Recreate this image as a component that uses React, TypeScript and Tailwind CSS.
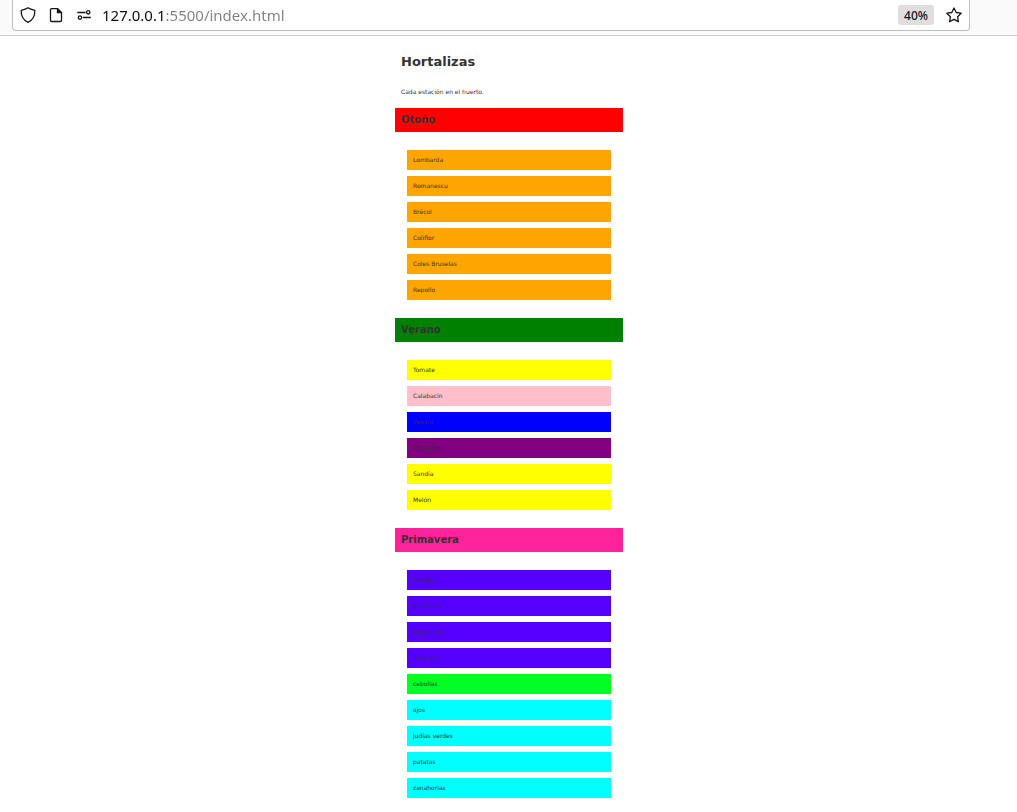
import React from "react";

type Crop = { name: string; color: string };
type Season = { title: string; color: string; crops: Crop[] };

const seasons: Season[] = [
  {
    title: "Otoño",
    color: "bg-[#ff0000]",
    crops: [
      { name: "Lombarda", color: "bg-[#ffa500]" },
      { name: "Romanescu", color: "bg-[#ffa500]" },
      { name: "Brécol", color: "bg-[#ffa500]" },
      { name: "Coliflor", color: "bg-[#ffa500]" },
      { name: "Coles Bruselas", color: "bg-[#ffa500]" },
      { name: "Repollo", color: "bg-[#ffa500]" },
    ],
  },
  {
    title: "Verano",
    color: "bg-[#008000]",
    crops: [
      { name: "Tomate", color: "bg-[#ffff00]" },
      { name: "Calabacín", color: "bg-[#ffc0cb]" },
      { name: "Pepino", color: "bg-[#0000ff]" },
      { name: "Pimiento", color: "bg-[#800080]" },
      { name: "Sandía", color: "bg-[#ffff00]" },
      { name: "Melón", color: "bg-[#ffff00]" },
    ],
  },
  {
    title: "Primavera",
    color: "bg-[#ff2299]",
    crops: [
      { name: "Acelgas", color: "bg-[#5500ff]" },
      { name: "guisantes", color: "bg-[#5500ff]" },
      { name: "espinacas", color: "bg-[#5500ff]" },
      { name: "lechugas", color: "bg-[#5500ff]" },
      { name: "cebollas", color: "bg-[#00ff22]" },
      { name: "ajos", color: "bg-[#00ffff]" },
      { name: "judías verdes", color: "bg-[#00ffff]" },
      { name: "patatas", color: "bg-[#00ffff]" },
      { name: "zanahorias", color: "bg-[#00ffff]" },
    ],
  },
];

function IconButton({ label, children }: { label: string; children: React.ReactNode }) {
  return (
    <button type="button" aria-label={label} className="flex size-4 shrink-0 items-center justify-center text-[#15141a]">
      <svg viewBox="0 0 16 16" className="size-4" fill="none" stroke="currentColor" strokeWidth="1.3" strokeLinejoin="round" strokeLinecap="round" aria-hidden="true">
        {children}
      </svg>
    </button>
  );
}

function AddressBar() {
  return (
    <header className="flex h-9 items-start border-b border-[#cccccc] bg-[#fafafa] pr-[47px] pl-3">
      <div className="flex h-[31px] flex-1 items-center rounded-b-[4px] border border-t-0 border-[#bfbfc3] bg-white px-[7px] font-['Noto_Sans','Open_Sans',sans-serif]">
        <div className="flex items-center gap-3">
          <IconButton label="Protección contra rastreo">
            <path d="M8 .8C6.200 2.200 3.800 2.800 1.200 3.300 1 8.600 3.200 13.200 8 15.400c4.800-2.200 7-6.800 6.800-12.100C12.200 2.800 9.800 2.200 8 .8Z" />
          </IconButton>
          <IconButton label="Información del sitio">
            <path d="M9.500 1.700H3.500a1 1 0 0 0-1 1v10.800a1 1 0 0 0 1 1h9a1 1 0 0 0 1-1V5.700Z" />
            <path d="M9.500 1.700v4h4Z" fill="currentColor" />
          </IconButton>
          <IconButton label="Permisos">
            <path d="M1.800 5.500h7.200M7.500 10.500h6.800" />
            <circle cx="12.200" cy="5.300" r="1.700" />
            <circle cx="4" cy="10.600" r="1.700" />
          </IconButton>
        </div>
        <input
          type="text"
          aria-label="Dirección"
          defaultValue="127.0.0.1:5500/index.html"
          spellCheck={false}
          className="ml-[10px] h-6 min-w-0 flex-1 bg-[linear-gradient(to_right,#0c0c0d_63px,#808085_63px)] bg-clip-text text-[15px] text-transparent outline-none"
        />
        <button type="button" className="h-5 rounded-[3px] bg-[#dedede] px-[6px] text-[12px] leading-[22px] font-medium text-[#15141a]">
          40%
        </button>
        <div className="ml-3 flex">
          <IconButton label="Añadir a marcadores">
            <path d="m8 1 2.200 4.500 4.900.7-3.500 3.500.8 5L8 12.400l-4.400 2.300.8-5L.9 6.200l4.900-.7Z" />
          </IconButton>
        </div>
      </div>
    </header>
  );
}

function SeasonSection({ season }: { season: Season }) {
  return (
    <section>
      <h2 className={`h-6 px-[6px] text-[10px] leading-6 font-bold ${season.color}`}>{season.title}</h2>
      <ul className="flex flex-col gap-[6px] px-3 py-[18px]">
        {season.crops.map((crop) => (
          <li key={crop.name} className={`h-5 px-[6px] leading-5 ${crop.color}`}>
            {crop.name}
          </li>
        ))}
      </ul>
    </section>
  );
}

export default function App() {
  return (
    <div className="min-h-screen bg-white">
      <AddressBar />
      <div className="pl-px">
        <main className="mx-auto w-full max-w-[228px] pt-4 font-['DejaVu_Sans',sans-serif] text-[6px] text-[#333333]">
          <h1 className="px-[6px] text-[13px] leading-5 font-bold">Hortalizas</h1>
          <p className="px-[6px] pt-[14px] pb-[10px] leading-3">Cada estación en el huerto.</p>
          {seasons.map((season) => (
            <SeasonSection key={season.title} season={season} />
          ))}
        </main>
      </div>
    </div>
  );
}
